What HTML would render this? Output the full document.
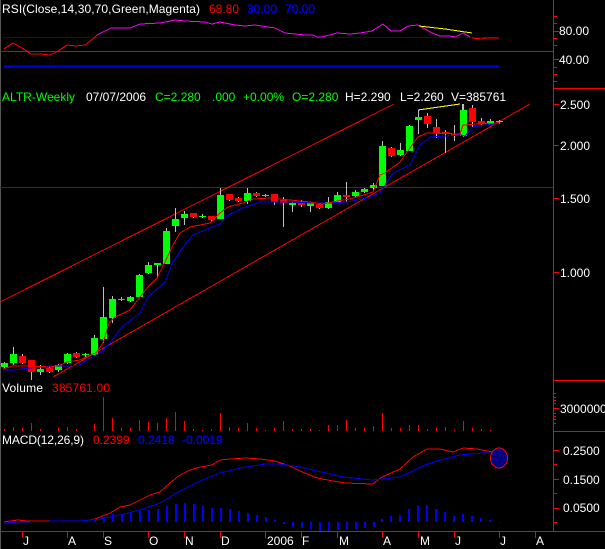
<!DOCTYPE html>
<html lang="en">
<head>
<meta charset="utf-8">
<title>ALTR-Weekly</title>
<style>
html,body{margin:0;padding:0;background:#000;width:605px;height:549px;overflow:hidden}
svg{display:block}
text{font-family:"Liberation Sans",Arial,sans-serif;font-size:12px;fill:#fff}
.g{fill:#00ff00}.r{fill:#ff0000}.b{fill:#0000ff;stroke:#0000ff;stroke-width:.25}
</style>
</head>
<body>
<svg width="605" height="549" viewBox="0 0 605 549" xmlns="http://www.w3.org/2000/svg">
<rect width="605" height="549" fill="#000"/>
<g shape-rendering="crispEdges" fill="none" stroke-width="1">
<path d="M0.5 0V549" stroke="#555"/>
<!-- frame lines -->
<path d="M0 51.5H553" stroke="#e00000"/>
<path d="M0 187.5H553" stroke="#a00000"/>
<path d="M553.5 0V531M553 88.5H605M553 380.5H605M553 431.5H605M0 531.5H605" stroke="#f00"/>
<!-- right ticks -->
<path d="M553 16.5h4M553 23.5h4M553 31.5h6M553 38.5h4M553 45.5h4M553 59.5h6M553 67.5h4M553 74.5h4M553 81.5h4M553 104.5h6M553 145.5h6M553 198.5h6M553 272.5h6M553 393.5h3M553 397.5h3M553 400.5h3M553 403.5h3M553 408.5h6M553 413.5h3M553 416.5h3M553 419.5h3M553 423.5h3M553 450.5h6M553 464.5h4M553 479.5h6M553 493.5h4M553 508.5h6M553 522.5h4" stroke="#f00"/>
<!-- bottom ticks -->
<path d="M22.5 532v6M67.5 532v6M103.5 532v6M148.5 532v6M184.5 532v6M220.5 532v6M265.5 532v6M301.5 532v6M337.5 532v6M382.5 532v6M418.5 532v6M454.5 532v6M499.5 532v6M535.5 532v6" stroke="#f00"/>
<!-- RSI levels -->
<path d="M4 37.5H499" stroke="#0000c8"/>
<path d="M4 66.5H499" stroke="#0000e8" stroke-width="2"/>
<!-- RSI line -->
<polyline stroke="#f00" points="4,49 13,43 22,48 31,54 40,54 50,55 58,51 67,45 76,46 85,45 94,38 97,35"/>
<polyline stroke="#ff00ff" points="97,35 111,28 130,28 140,24 160,23 175,20 185,21 205,22 212,24 220,22 235,25 245,26 255,25 275,28 285,33 295,34 305,35 313,35 317,37 322,37 337,33 350,34 360,33 372,31 383,24 391,31 400,31 408,26 418,25 432,33 440,36 450,36 455,37 463,33 470,37"/>
<polyline stroke="#f00" points="472,38 482,39 485,38 499,38"/>
<polyline stroke="#ffff00" points="419,26 445,29 472,33"/>
<!-- channel lines -->
<path d="M0 302L394 104" stroke="#f00" shape-rendering="crispEdges"/>
<path d="M53 377L530 104" stroke="#f00" shape-rendering="crispEdges"/>
<polyline stroke="#ffff00" points="418,110 460,104"/>
<path d="M462.5 104V110" stroke="#c0c0c0"/>
<!-- wicks -->
<path stroke="#c0c0c0" d="M4.5 362V368M13.5 347V365M22.5 354V364M31.5 360V380M40.5 365V375M49.5 367V373M58.5 364V372M67.5 353V364M76.5 352V358M85.5 353V357M94.5 335V355M103.5 287V343M112.5 296V323M121.5 297V301M130.5 296V302M139.5 274V297M148.5 262V274M157.5 263V278M166.5 228V264M175.5 208V232M184.5 211V225M193.5 213V218M202.5 214V218M211.5 216V222M220.5 188V219M229.5 194V201M238.5 197V202M247.5 188V204M256.5 192V197M265.5 194V197M274.5 194V205M283.5 197V227M292.5 202V212M301.5 200V207M310.5 203V212M319.5 204V209M328.5 197V209M337.5 192V203M346.5 182V202M355.5 190V198M364.5 188V193M373.5 183V191M382.5 141V186M391.5 147V157M400.5 143V156M409.5 125V151M418.5 110V134M427.5 113V128M436.5 119V138M445.5 130V153M454.5 125V141M463.5 104V137M472.5 105V127M481.5 118V125M490.5 119V125M499.5 120V124"/>
<!-- green bodies -->
<g fill="#00ff00">
<rect x="1" y="363" width="7" height="4"/><rect x="10" y="354" width="7" height="9"/><rect x="37" y="369" width="7" height="3"/><rect x="55" y="365" width="7" height="5"/><rect x="64" y="354" width="7" height="9"/><rect x="82" y="354" width="7" height="1"/><rect x="91" y="338" width="7" height="17"/><rect x="100" y="317" width="7" height="22"/><rect x="109" y="299" width="7" height="19"/><rect x="118" y="299" width="7" height="1"/><rect x="127" y="297" width="7" height="4"/><rect x="136" y="275" width="7" height="22"/><rect x="145" y="265" width="7" height="8"/><rect x="154" y="263" width="7" height="2"/><rect x="163" y="231" width="7" height="33"/><rect x="172" y="219" width="7" height="7"/><rect x="181" y="214" width="7" height="4"/><rect x="199" y="216" width="7" height="1"/><rect x="217" y="195" width="7" height="24"/><rect x="244" y="193" width="7" height="8"/><rect x="262" y="195" width="7" height="1"/><rect x="289" y="203" width="7" height="2"/><rect x="307" y="203" width="7" height="3"/><rect x="325" y="202" width="7" height="6"/><rect x="334" y="195" width="7" height="8"/><rect x="352" y="192" width="7" height="4"/><rect x="361" y="189" width="7" height="3"/><rect x="370" y="185" width="7" height="3"/><rect x="379" y="146" width="7" height="40"/><rect x="397" y="150" width="7" height="5"/><rect x="406" y="126" width="7" height="25"/><rect x="415" y="117" width="7" height="3"/><rect x="460" y="110" width="7" height="26"/><rect x="487" y="121" width="7" height="2"/><rect x="496" y="121" width="7" height="1"/>
</g>
<!-- red bodies -->
<g fill="#ff0000">
<rect x="19" y="356" width="7" height="7"/><rect x="28" y="360" width="7" height="12"/><rect x="46" y="368" width="7" height="4"/><rect x="73" y="353" width="7" height="4"/><rect x="190" y="213" width="7" height="4"/><rect x="208" y="216" width="7" height="4"/><rect x="226" y="194" width="7" height="6"/><rect x="235" y="198" width="7" height="3"/><rect x="253" y="193" width="7" height="3"/><rect x="271" y="194" width="7" height="8"/><rect x="280" y="200" width="7" height="3"/><rect x="298" y="202" width="7" height="3"/><rect x="316" y="204" width="7" height="4"/><rect x="343" y="195" width="7" height="2"/><rect x="388" y="148" width="7" height="8"/><rect x="424" y="116" width="7" height="8"/><rect x="433" y="127" width="7" height="6"/><rect x="442" y="132" width="7" height="2"/><rect x="451" y="134" width="7" height="2"/><rect x="469" y="108" width="7" height="14"/><rect x="478" y="121" width="7" height="3"/>
</g>
<!-- moving averages -->
<polyline stroke="#0000ff" points="3,370 13,370 30,368 50,366 70,366 80,365 90,358 100,353 110,343 122,327 140,313 148,297 165,282 173,262 183,247 193,235 207,229 220,224 228,215 243,208 260,202 290,202 313,203 330,203 347,202 367,198 380,193 393,173 410,165 420,145 430,137 460,135 465,136 473,127 493,124 499,123"/>
<polyline stroke="#ff0000" points="3,369 13,366 31,366 50,367 60,365 67,362 80,360 92,354 96,353 103,343 109,323 115,317 130,310 140,297 148,287 157,278 165,262 173,245 180,233 190,227 200,225 210,223 220,213 228,207 243,203 253,199 270,198 290,200 310,202 323,204 337,201 350,199 360,196 373,192 380,175 385,173 400,162 410,148 418,137 427,133 460,134 463,125 477,124 500,123"/>
<!-- volume -->
<path stroke="#ff0000" d="M4.5 429V431M13.5 427V431M22.5 428V431M31.5 423V431M40.5 429V431M58.5 428V431M67.5 427V431M76.5 429V431M94.5 424V431M103.5 397V431M112.5 418V431M121.5 428V431M130.5 428V431M139.5 420V431M148.5 422V431M157.5 423V431M166.5 418V431M175.5 412V431M184.5 421V431M193.5 429V431M202.5 430V431M211.5 429V431M220.5 413V431M229.5 427V431M238.5 428V431M247.5 423V431M256.5 428V431M265.5 430V431M274.5 428V431M283.5 421V431M292.5 429V431M301.5 429V431M310.5 429V431M319.5 430V431M328.5 425V431M337.5 425V431M346.5 420V431M355.5 428V431M364.5 428V431M373.5 426V431M382.5 413V431M391.5 428V431M400.5 428V431M409.5 425V431M418.5 425V431M427.5 429V431M436.5 428V431M445.5 427V431M454.5 430V431M463.5 421V431M472.5 428V431M481.5 429V431M490.5 430V431"/>
<!-- MACD histogram -->
<g fill="#0000ff">
<rect x="94" y="519" width="2" height="3"/><rect x="103" y="518" width="2" height="4"/><rect x="112" y="514" width="2" height="8"/><rect x="121" y="514" width="2" height="8"/><rect x="130" y="513" width="2" height="9"/><rect x="139" y="511" width="2" height="11"/><rect x="148" y="510" width="2" height="12"/><rect x="157" y="509" width="2" height="13"/><rect x="166" y="506" width="2" height="16"/><rect x="175" y="504" width="2" height="18"/><rect x="184" y="503" width="2" height="19"/><rect x="193" y="504" width="2" height="18"/><rect x="202" y="506" width="2" height="16"/><rect x="211" y="508" width="2" height="14"/><rect x="220" y="508" width="2" height="14"/><rect x="229" y="509" width="2" height="13"/><rect x="238" y="511" width="2" height="11"/><rect x="247" y="513" width="2" height="9"/><rect x="256" y="515" width="2" height="7"/><rect x="265" y="517" width="2" height="5"/><rect x="274" y="520" width="2" height="2"/><rect x="283" y="522" width="2" height="2"/><rect x="292" y="522" width="2" height="5"/>
<rect x="301" y="522" width="2" height="6"/><rect x="310" y="522" width="2" height="7"/><rect x="319" y="522" width="2" height="9"/><rect x="328" y="522" width="2" height="9"/><rect x="337" y="522" width="2" height="8"/><rect x="346" y="522" width="2" height="8"/><rect x="355" y="522" width="2" height="7"/><rect x="364" y="522" width="2" height="6"/><rect x="373" y="522" width="2" height="5"/>
<rect x="381" y="519" width="2" height="3"/><rect x="390" y="516" width="2" height="6"/><rect x="399" y="515" width="2" height="7"/><rect x="408" y="509" width="2" height="13"/><rect x="417" y="505" width="2" height="17"/><rect x="426" y="505" width="2" height="17"/><rect x="435" y="509" width="2" height="13"/><rect x="444" y="512" width="2" height="10"/><rect x="453" y="516" width="2" height="6"/><rect x="462" y="514" width="2" height="8"/><rect x="471" y="516" width="2" height="6"/><rect x="480" y="518" width="2" height="4"/><rect x="489" y="520" width="2" height="2"/><rect x="499" y="522" width="1" height="1"/>
</g>
<!-- MACD lines -->
<polyline stroke="#ff0000" points="4,522 10,521 18,520 27,521 80,521 90,520 95,519 100,517 110,513 120,507 130,505 140,500 150,495 160,492 170,483 180,475 190,470 200,467 212,465 220,460 230,459 245,458 260,459 275,461 290,466 300,471 317,478 333,481 345,483 373,484 382,477 400,469 413,457 427,449 440,449 453,452 463,448 477,449 498,453"/>
<polyline stroke="#0000ff" points="4,523 20,522 60,521 80,521 100,519 120,515 140,510 160,503 180,491 200,481 220,473 240,468 265,464 280,464 300,467 343,477 372,480 383,479 400,477 425,465 440,460 460,455 483,453 497,453"/>
<ellipse cx="499" cy="458" rx="8.5" ry="10" fill="#000080" stroke="#ff0000"/>
</g>
<!-- text -->
<text x="2" y="13" textLength="198">RSI(Close,14,30,70,Green,Magenta)</text>
<text x="209" y="13" class="r">68.80</text>
<text x="247" y="13" class="b">30.00</text>
<text x="285" y="13" class="b">70.00</text>
<text x="2" y="101" class="g" textLength="73">ALTR-Weekly</text>
<text x="86" y="101">07/07/2006</text>
<text x="155" y="101" class="g">C=2.280</text>
<text x="212" y="101" class="g">.000</text>
<text x="243" y="101" class="g">+0.00%</text>
<text x="292" y="101" class="g">O=2.280</text>
<text x="345" y="101">H=2.290</text>
<text x="400" y="101">L=2.260</text>
<text x="451" y="101">V=385761</text>
<text x="2" y="392" textLength="41">Volume</text>
<text x="52" y="392" class="r" textLength="58">385761.00</text>
<text x="2" y="444" textLength="82">MACD(12,26,9)</text>
<text x="93" y="444" class="r">0.2399</text>
<text x="138" y="444" class="b">0.2418</text>
<text x="182" y="444" class="b">-0.0019</text>
<text x="559" y="35">80.00</text>
<text x="559" y="64">40.00</text>
<text x="560" y="109">2.500</text>
<text x="560" y="150">2.000</text>
<text x="560" y="203">1.500</text>
<text x="560" y="277">1.000</text>
<text x="560" y="413">3000000</text>
<text x="563" y="455">0.2500</text>
<text x="563" y="484">0.1500</text>
<text x="563" y="512">0.0500</text>
<text x="23" y="545">J</text>
<text x="68" y="545">A</text>
<text x="104" y="545">S</text>
<text x="149" y="545">O</text>
<text x="185" y="545">N</text>
<text x="221" y="545">D</text>
<text x="267" y="545">2006</text>
<text x="302" y="545">F</text>
<text x="339" y="545">M</text>
<text x="383" y="545">A</text>
<text x="420" y="545">M</text>
<text x="455" y="545">J</text>
<text x="500" y="545">J</text>
<text x="536" y="545">A</text>
</svg>
</body>
</html>
